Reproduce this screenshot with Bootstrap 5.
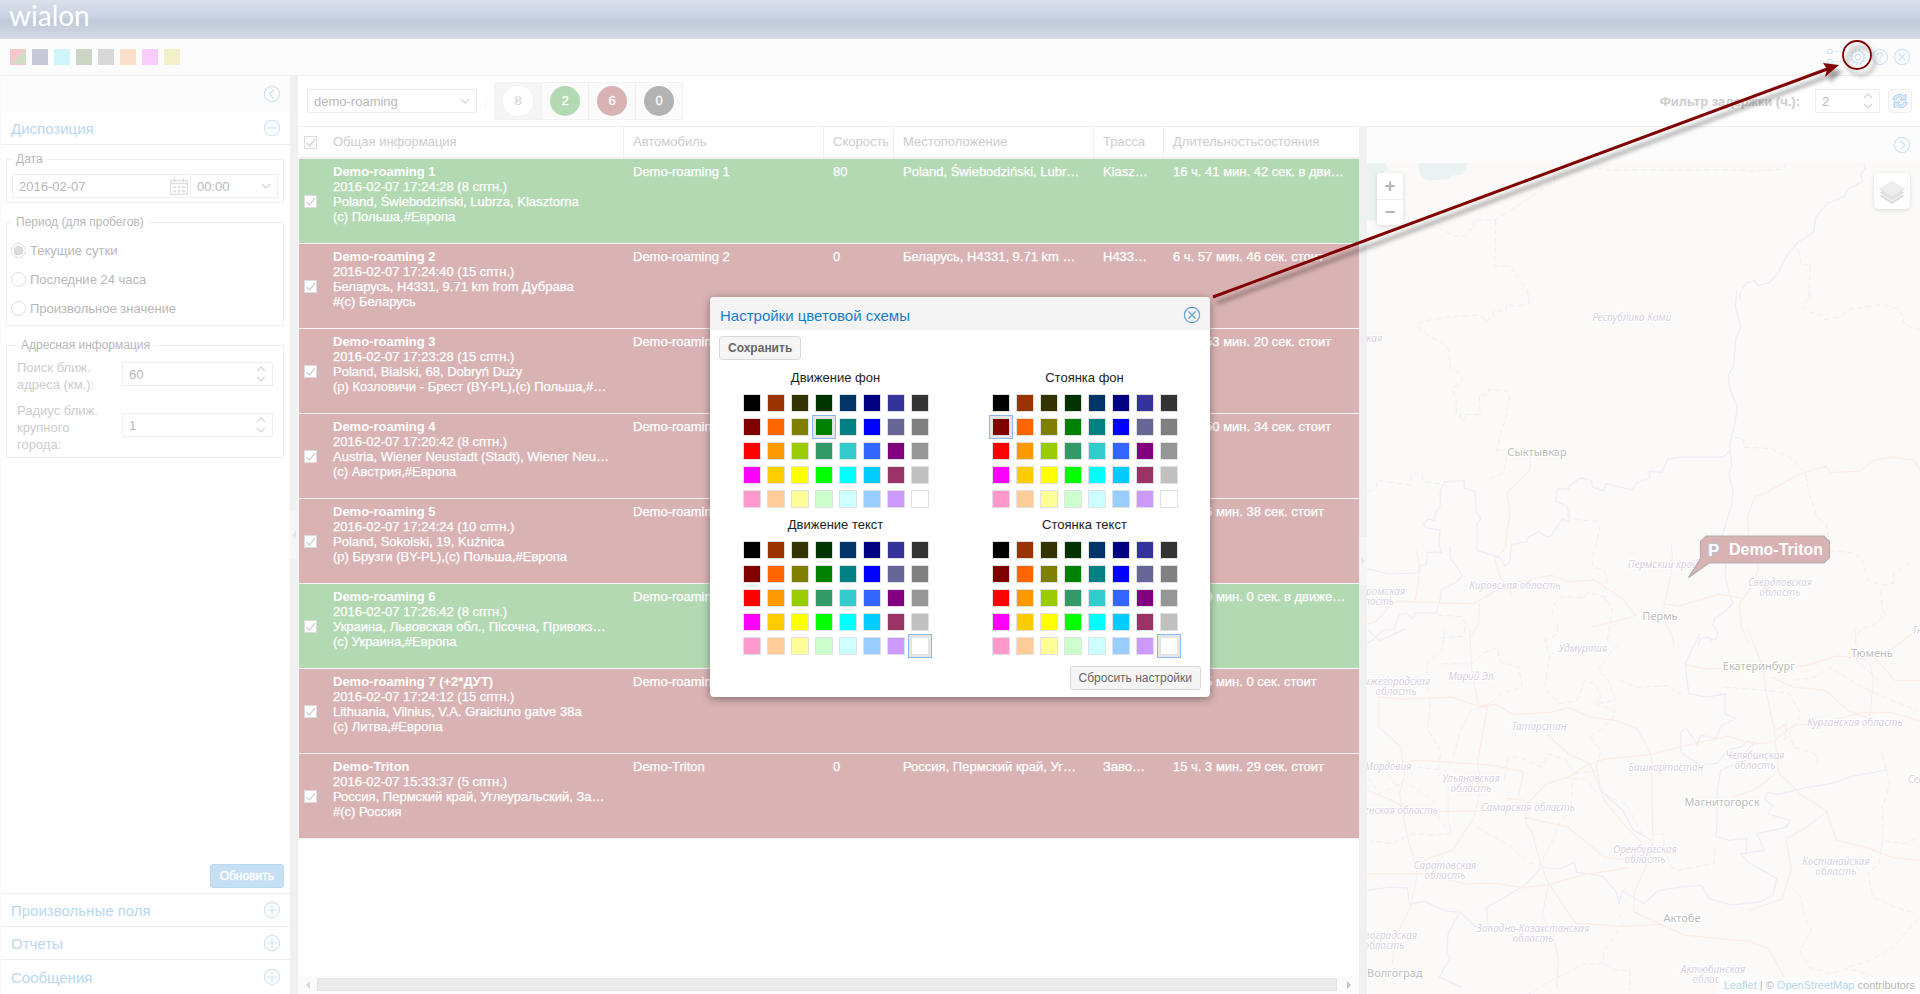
<!DOCTYPE html>
<html lang="ru">
<head>
<meta charset="utf-8">
<meta name="viewport" content="width=device-width, initial-scale=1">
<title>Wialon</title>
<link href="https://cdn.jsdelivr.net/npm/bootstrap@5.3.0/dist/css/bootstrap.min.css" rel="stylesheet">
<style>
:root{--line:#efefef;--ink:#b8b8b8;--pale:#cdcdcd;--link:#b9d8f0;--ring:#cfe3f2}
body{font-family:"Liberation Sans",Arial,sans-serif;font-size:13px;line-height:15px;color:var(--ink);background:#fff}
button,input,select{font-family:inherit;font-size:13px}
.app{height:100vh;min-height:700px}
.masthead{height:39px;background:linear-gradient(#dbe1ec 0,#c8d2e2 18px,#c1cad7 19px,#c5cedb 26px,#d5d9e7 39px)}
.brand{font-family:Lato,sans-serif;font-size:28px;line-height:30px;color:#fff;padding-left:9px;text-decoration:none}
.tools{height:37px;background:#fcfcfc;border-bottom:1px solid var(--line);padding:0 9px 0 10px;gap:6px}
.chip{width:16px;height:16px;border:0;padding:0}
.chip.mix{background:linear-gradient(135deg,#f8c8c8 50%,#d3dcc8 50%);border:1px solid #f8c8c8}
.ic{width:18px;height:18px;display:block;fill:none;stroke:var(--ring);stroke-width:1.2}
.plain{border:0;background:none;padding:0}
.side{width:290px;flex:none;border-left:1px solid #fafafa}
.side-top{height:36px;background:#fcfcfc;padding-right:9px}
.acc{height:33px;font-size:15px;color:var(--link);border-top:1px solid var(--line);padding:0 9px 0 10px;text-align:left}
.acc.first{border-top:0;border-bottom:1px solid var(--line)}
.acc:last-child{height:35px}
.splitter{width:8px;flex:none;background:#f0f0f0;display:flex;align-items:center}
.grip{width:8px;height:48px;background:#f6f6f6}
fieldset.fs{border:1px solid var(--line);margin:19px 6px 0 5px;position:relative}
fieldset.dated{margin-top:14px;padding:14px 5px 4px}
fieldset.period{padding:13px 4px 2px}
fieldset.deep{padding:13px 10px 4px}
.fs legend{position:absolute;top:-9px;left:5px;width:auto;float:none;margin:0;padding:0 4px;font-size:12px;line-height:16px;background:#fff}
.fs.deep legend{left:10px}
.field{height:24px;border:1px solid var(--line);background:#fff;position:relative;display:flex;align-items:center}
.field input,.field select{border:0;outline:0;background:none;color:var(--ink);width:100%;padding:0 6px;appearance:none;height:22px}
.field svg{position:absolute;right:6px;pointer-events:none}
.opt{height:29px;display:flex;align-items:center;gap:4px}
.opt input{appearance:none;width:15px;height:15px;border:1px solid #dedede;border-radius:50%;margin:0}
.opt input:checked{background:radial-gradient(circle,#dcdcdc 0 5px,#fff 5px)}
.lbl{width:105px;padding-right:15px;line-height:17px;color:var(--pale);flex:none}
.refresh{height:24px;border:1px solid #b9dbf0;border-radius:3px;background:#c5e0f3;color:#fff;padding:0 9px;font-size:12px;-webkit-text-stroke:.3px #fff}
.bar{height:51px;border-bottom:1px solid var(--line);padding:0 8px 0 9px}
.seg{height:38px;border:1px solid #f2f2f2;border-radius:2px;background:#fbfbfb;display:flex}
.seg button{border:0;border-left:1px solid #f0f0f0;width:47px;background:none;padding:0;display:flex;align-items:center;justify-content:center}
.seg button:first-child{background:#f5f5f5;border-left:0;width:46px}
.dot{width:30px;height:30px;border-radius:50%;line-height:30px;color:#fff;font-size:13px;-webkit-text-stroke:.3px #fff}
.reload{width:24px;height:24px;border:1px solid #efefef;background:#fbfbfb;padding:0}
.grid-pane{border-left:1px solid #fafafa;min-width:0}
table.units{table-layout:fixed;width:100%;border-collapse:separate;border-spacing:0}
.units th{height:32px;font-weight:400;color:var(--pale);padding:0 9px 2px;border-left:1px solid var(--line);border-bottom:2px solid #f0f0f0;white-space:nowrap;overflow:hidden}
.units th:nth-child(-n+2){border-left:0;padding-left:10px}
.units td{height:85px;vertical-align:top;padding:5px 10px 0;border-bottom:1px solid #f3f3f5;color:#fff;white-space:nowrap;overflow:hidden;-webkit-text-stroke:.25px #fff}
.units td b{-webkit-text-stroke:0}
.units .pick,.units th.pick{padding:0 0 0 5px;vertical-align:middle;overflow:visible}
.go td{background:#b3d9b3}
.halt td{background:#d9b3b3}
.tick{appearance:none;width:13px;height:13px;border:1px solid #dcdcdc;margin:0;display:block;background:#fff url("data:image/svg+xml,%3Csvg xmlns='http://www.w3.org/2000/svg' viewBox='0 0 11 11'%3E%3Cpath d='M1.5 6l3 3 5.500-7' fill='none' stroke='%23d2d2d2' stroke-width='1.300'/%3E%3C/svg%3E")}
.hscroll{height:18px;background:#fbfbfb;padding:2px 7px 3px;gap:6px}
.thumb{height:13px;background:#ebebeb;border:1px solid #e4e4e4}
.map-pane{flex:0 0 28.8vw}
.map-top{height:36px;background:#fcfcfc;padding-right:9px}
.map-area{background:#fbfaf9;overflow:hidden}
.map-area>svg{position:absolute;inset:0;width:100%;height:100%}
.edge path{fill:none;vector-effect:non-scaling-stroke;stroke:#f3eaf6;stroke-width:1.3}
.edge .dash{stroke:#f1eef4;stroke-dasharray:6 3;stroke-width:1}
.edge .road{stroke:#fdece6;stroke-width:1.2}
.edge path.lake{fill:#ebf3f2;stroke:none}
.names text{font-family:"Noto Sans",sans-serif;font-size:10px;font-style:italic;fill:#dccfe0;text-anchor:middle;paint-order:stroke;stroke:#fff;stroke-width:2px}
.names text.town{font-style:normal;font-size:11px;fill:#bdbdbd}
.names text.r{text-anchor:end}
.names text.l{text-anchor:start}
.zoomer{position:absolute;left:10px;top:10px;width:26px;border-radius:4px;background:#fff;box-shadow:0 1px 5px #0002}
.zoomer button{border:0;background:none;display:block;width:26px;height:26px;padding:0;font:bold 18px/25px "Liberation Sans",Arial,sans-serif;color:#b5b5b5}
.zoomer button+button{border-top:1px solid var(--line)}
.layers{position:absolute;right:10px;top:10px;width:36px;height:36px;border:0;border-radius:5px;background:#fff;box-shadow:0 1px 5px #0002;padding:4px}
.credit{position:absolute;right:0;bottom:0;background:#fdfdfd;font-size:11px;line-height:17px;padding:0 5px;white-space:nowrap}
.credit a{color:#b2d9e8;text-decoration:none}
.callout{position:absolute;inset:0;width:100%;height:100%;pointer-events:none}
.dlg{width:500px;border-radius:4px;background:#fff;box-shadow:0 2px 8px #0006;color:#222}
.dlg-head{height:33px;background:#f4f4f4;border-radius:4px 4px 0 0;padding:3px 9px 0 10px;font-size:15px;color:#157fcc}
.dlg-head .ic{stroke:#5ea2d3}
.dlg-btn{height:24px;border:1px solid #d8d8d8;border-radius:3px;background:#f5f5f5;color:#666;padding:0 8px;font-size:12px;line-height:20px}
.cap{height:27px;line-height:27px;text-align:center}
.swatches{display:grid;grid-template-columns:repeat(8,24px);justify-content:center}
.sw{width:24px;height:24px;border:1px solid transparent;background:none;padding:2px}
.sw.on{border-color:#8bb8f3;background:#e6e6e6}
.sw i{display:block;width:18px;height:18px;border:1px solid #e1e1e1}
</style>
</head>
<body>
<div class="app d-flex flex-column position-relative overflow-hidden">
<header class="masthead flex-shrink-0"><a class="brand d-inline-block" href="#">wialon</a></header>
<div class="tools d-flex align-items-center flex-shrink-0">
  <button class="chip mix" aria-label="Стандартная"></button>
  <button class="chip" aria-label="Синяя" style="background:#c6c8d6"></button>
  <button class="chip" aria-label="Голубая" style="background:#cff5fb"></button>
  <button class="chip" aria-label="Зелёная" style="background:#ccd6c4"></button>
  <button class="chip" aria-label="Серая" style="background:#d8d8d8"></button>
  <button class="chip" aria-label="Оранжевая" style="background:#fcdfca"></button>
  <button class="chip" aria-label="Розовая" style="background:#f8cdf9"></button>
  <button class="chip" aria-label="Жёлтая" style="background:#f3f1ca"></button>
  <div class="ms-auto d-flex align-items-center gap-1">
    <button class="plain" aria-label="Дерево"><svg class="ic" viewBox="0 0 18 18"><path d="M1 1.500h4v4h-4zM1 11.500h4v4h-4z"/><path d="M7 3.500h10M7 13.500h10" stroke-dasharray="1 1"/></svg></button>
    <button class="plain" aria-label="Настройки"><svg class="ic" viewBox="0 0 18 18"><circle cx="9" cy="9" r="2.800"/><circle cx="9" cy="9" r="6"/><circle cx="9" cy="9" r="7.300" stroke-width="1.800" stroke-dasharray="2 1.820"/></svg></button>
    <button class="plain" aria-label="Справка"><svg class="ic" viewBox="0 0 18 18"><circle cx="9" cy="9" r="7.600"/><path d="M6.500 7.200c0-3.400 5-3.200 5-.2 0 2-2.500 1.800-2.500 4M9 12.300v1.400"/></svg></button>
    <button class="plain" aria-label="Закрыть"><svg class="ic" viewBox="0 0 18 18"><circle cx="9" cy="9" r="7.600"/><path d="M5.500 5.500l7 7M12.500 5.500l-7 7"/></svg></button>
  </div>
</div>

<div class="d-flex flex-grow-1" style="min-height:0">
  <aside class="side d-flex flex-column">
    <div class="side-top d-flex align-items-center justify-content-end flex-shrink-0">
      <button class="plain" aria-label="Свернуть"><svg class="ic" viewBox="0 0 18 18"><circle cx="9" cy="9" r="7.600"/><path d="M11 4.500L6.500 9l4.500 4.500"/></svg></button>
    </div>
    <button class="plain acc first d-flex align-items-center justify-content-between flex-shrink-0">Диспозиция<svg class="ic" viewBox="0 0 18 18"><circle cx="9" cy="9" r="7.600"/><path d="M4 9h10"/></svg></button>
    <form class="d-flex flex-column flex-grow-1" style="min-height:0">
      <fieldset class="fs dated d-flex flex-shrink-0"><legend>Дата</legend>
        <div class="field" style="width:179px"><input type="text" value="2016-02-07" aria-label="Дата"><svg style="right:2px" width="18" height="18" viewBox="0 0 18 18" fill="none" stroke="#dedede"><path d="M.5 3.500h17v14H.5z" stroke-width="1.300"/><path d="M1 6.500h16M4.500 1v4M13.500 1v4" stroke-width="1.300"/><path d="M3.500 9.500h2v1.500h-2zM8 9.500h2v1.500H8zM12.500 9.500h2v1.500h-2zM3.500 13.500h2V15h-2zM8 13.500h2V15H8zM12.500 13.500h2V15h-2z"/></svg></div>
        <div class="field flex-grow-1 border-start-0"><select aria-label="Время"><option>00:00</option></select><svg width="10" height="6" fill="none" stroke="#d4d4d4" stroke-width="1.200"><path d="M1 1l4 4 4-4"/></svg></div>
      </fieldset>
      <fieldset class="fs period flex-shrink-0"><legend>Период (для пробегов)</legend>
        <label class="opt"><input type="radio" name="period" checked>Текущие сутки</label>
        <label class="opt"><input type="radio" name="period">Последние 24 часа</label>
        <label class="opt"><input type="radio" name="period">Произвольное значение</label>
      </fieldset>
      <fieldset class="fs deep flex-shrink-0"><legend>Адресная информация</legend>
        <div class="d-flex align-items-start"><label class="lbl" for="near">Поиск ближ. адреса (км.):</label><div class="field flex-grow-1" style="margin-top:3px"><input id="near" type="text" value="60"><svg width="10" height="16" fill="none" stroke="#d4d4d4" stroke-width="1.200"><path d="M1 5l4-4 4 4M1 11l4 4 4-4"/></svg></div></div>
        <div class="d-flex align-items-start" style="margin-top:9px"><label class="lbl" for="big">Радиус ближ. крупного города:</label><div class="field flex-grow-1" style="margin-top:11px"><input id="big" type="text" value="1"><svg width="10" height="16" fill="none" stroke="#d4d4d4" stroke-width="1.200"><path d="M1 5l4-4 4 4M1 11l4 4 4-4"/></svg></div></div>
      </fieldset>
      <div class="mt-auto text-end" style="padding:0 6px 5px"><button type="button" class="refresh">Обновить</button></div>
    </form>
    <button class="plain acc d-flex align-items-center justify-content-between flex-shrink-0">Произвольные поля<svg class="ic" viewBox="0 0 18 18"><circle cx="9" cy="9" r="7.600"/><path d="M4 9h10M9 4v10"/></svg></button>
    <button class="plain acc d-flex align-items-center justify-content-between flex-shrink-0">Отчеты<svg class="ic" viewBox="0 0 18 18"><circle cx="9" cy="9" r="7.600"/><path d="M4 9h10M9 4v10"/></svg></button>
    <button class="plain acc d-flex align-items-center justify-content-between flex-shrink-0">Сообщения<svg class="ic" viewBox="0 0 18 18"><circle cx="9" cy="9" r="7.600"/><path d="M4 9h10M9 4v10"/></svg></button>
  </aside>
  <div class="splitter"><svg class="grip" viewBox="0 0 8 48"><path d="M6 20v8L2 24z" fill="#e6e6e6"/></svg></div>

  <main class="d-flex flex-column flex-grow-1" style="min-width:0">
    <div class="bar d-flex align-items-center flex-shrink-0">
      <div class="field" style="width:170px"><select aria-label="Группа"><option>demo-roaming</option></select><svg width="10" height="6" fill="none" stroke="#d4d4d4" stroke-width="1.200"><path d="M1 1l4 4 4-4"/></svg></div>
      <div class="vr mx-2" style="height:14px;align-self:center;opacity:.12"></div>
      <div class="seg">
        <button aria-pressed="true"><span class="dot" style="background:#fff;color:#b8b8b8">8</span></button>
        <button><span class="dot" style="background:#b3d9b3">2</span></button>
        <button><span class="dot" style="background:#d9b3b3">6</span></button>
        <button><span class="dot" style="background:#b3b3b3">0</span></button>
      </div>
      <label class="ms-auto fw-bold" for="delay" style="color:#cdcdcd;margin-right:15px">Фильтр задержки (ч.):</label>
      <div class="field" style="width:65px"><input id="delay" type="text" value="2"><svg width="10" height="16" fill="none" stroke="#d4d4d4" stroke-width="1.200"><path d="M1 5l4-4 4 4M1 11l4 4 4-4"/></svg></div>
      <button class="reload ms-2 rounded-1" aria-label="Обновить"><svg width="16" height="16" viewBox="0 0 16 16" class="d-block mx-auto" fill="#d9ecfc" stroke="#a5cdf2" stroke-width=".9"><path d="M1 6.800C1.400 1.800 7.500-.6 11.600 3L14 1v6H8l1.800-2C7.200 3 4.600 4.300 4.200 6.800z"/><path d="M15 9.200c-.4 5-6.500 7.400-10.600 3.800L2 15V9h6l-1.800 2c2.600 2 5.200.7 5.600-1.800z"/></svg></button>
    </div>
    <div class="d-flex flex-grow-1" style="min-height:0">
      <section class="grid-pane d-flex flex-column flex-grow-1">
        <div class="flex-grow-1 overflow-hidden">
        <table class="units">
          <colgroup><col style="width:24px"><col style="width:300px"><col style="width:200px"><col style="width:70px"><col style="width:200px"><col style="width:70px"><col></colgroup>
          <thead><tr><th class="pick"><input class="tick" type="checkbox" checked aria-label="Все"></th><th>Общая информация</th><th>Автомобиль</th><th>Скорость</th><th>Местоположение</th><th>Трасса</th><th>Длительностьсостояния</th></tr></thead>
          <tbody>
          <tr class="go"><td class="pick"><input class="tick" type="checkbox" checked aria-label="Demo-roaming 1"></td><td><b>Demo-roaming 1</b><br>2016-02-07 17:24:28 (8 сптн.)<br>Poland, Świebodziński, Lubrza, Klasztorna<br>(с) Польша,#Европа</td><td>Demo-roaming 1</td><td>80</td><td>Poland, Świebodziński, Lubr…</td><td>Klasz…</td><td>16 ч. 41 мин. 42 сек. в дви…</td></tr>
          <tr class="halt"><td class="pick"><input class="tick" type="checkbox" checked aria-label="Demo-roaming 2"></td><td><b>Demo-roaming 2</b><br>2016-02-07 17:24:40 (15 сптн.)<br>Беларусь, H4331, 9.71 km from Дубрава<br>#(с) Беларусь</td><td>Demo-roaming 2</td><td>0</td><td>Беларусь, H4331, 9.71 km …</td><td>H433…</td><td>6 ч. 57 мин. 46 сек. стоит</td></tr>
          <tr class="halt"><td class="pick"><input class="tick" type="checkbox" checked aria-label="Demo-roaming 3"></td><td><b>Demo-roaming 3</b><br>2016-02-07 17:23:28 (15 сптн.)<br>Poland, Bialski, 68, Dobryń Duży<br>(р) Козловичи - Брест (BY-PL),(с) Польша,#…</td><td>Demo-roaming 3</td><td></td><td></td><td></td><td>13 ч. 53 мин. 20 сек. стоит</td></tr>
          <tr class="halt"><td class="pick"><input class="tick" type="checkbox" checked aria-label="Demo-roaming 4"></td><td><b>Demo-roaming 4</b><br>2016-02-07 17:20:42 (8 сптн.)<br>Austria, Wiener Neustadt (Stadt), Wiener Neu…<br>(с) Австрия,#Европа</td><td>Demo-roaming 4</td><td></td><td></td><td></td><td>12 ч. 50 мин. 34 сек. стоит</td></tr>
          <tr class="halt"><td class="pick"><input class="tick" type="checkbox" checked aria-label="Demo-roaming 5"></td><td><b>Demo-roaming 5</b><br>2016-02-07 17:24:24 (10 сптн.)<br>Poland, Sokolski, 19, Kuźnica<br>(р) Брузги (BY-PL),(с) Польша,#Европа</td><td>Demo-roaming 5</td><td></td><td></td><td></td><td>15 ч. 6 мин. 38 сек. стоит</td></tr>
          <tr class="go"><td class="pick"><input class="tick" type="checkbox" checked aria-label="Demo-roaming 6"></td><td><b>Demo-roaming 6</b><br>2016-02-07 17:26:42 (8 сптн.)<br>Украина, Львовская обл., Пісочна, Привокз…<br>(с) Украина,#Европа</td><td>Demo-roaming 6</td><td></td><td></td><td></td><td>8 ч. 20 мин. 0 сек. в движе…</td></tr>
          <tr class="halt"><td class="pick"><input class="tick" type="checkbox" checked aria-label="Demo-roaming 7"></td><td><b>Demo-roaming 7 (+2*ДУТ)</b><br>2016-02-07 17:24:12 (15 сптн.)<br>Lithuania, Vilnius, V.A. Graiciuno gatve 38a<br>(с) Литва,#Европа</td><td>Demo-roaming 7</td><td></td><td></td><td></td><td>15 ч. 5 мин. 0 сек. стоит</td></tr>
          <tr class="halt"><td class="pick"><input class="tick" type="checkbox" checked aria-label="Demo-Triton"></td><td><b>Demo-Triton</b><br>2016-02-07 15:33:37 (5 сптн.)<br>Россия, Пермский край, Углеуральский, За…<br>#(с) Россия</td><td>Demo-Triton</td><td>0</td><td>Россия, Пермский край, Уг…</td><td>Заво…</td><td>15 ч. 3 мин. 29 сек. стоит</td></tr>
          </tbody>
        </table>
        </div>
        <div class="hscroll d-flex align-items-center"><svg width="5" height="8"><path d="M4 0v8L0 4z" fill="#d9d9d9"/></svg><div class="thumb flex-grow-1 me-1"></div><svg width="5" height="8"><path d="M0 0v8l4-4z" fill="#c4c4c4"/></svg></div>
      </section>
      <div class="splitter"><svg class="grip" viewBox="0 0 8 48"><path d="M2 20v8l4-4z" fill="#e6e6e6"/></svg></div>
      <section class="map-pane d-flex flex-column">
        <div class="map-top d-flex align-items-center justify-content-end flex-shrink-0"><button class="plain" aria-label="Свернуть карту"><svg class="ic" viewBox="0 0 18 18"><circle cx="9" cy="9" r="7.600"/><path d="M7.500 4.500L12 9l-4.500 4.500"/></svg></button></div>
        <div class="map-area flex-grow-1 position-relative">
          <svg viewBox="1367 162 553 832" preserveAspectRatio="xMidYMid slice">
            <g class="edge" transform="translate(1300 0) scale(.3954 .3333)">
              <path class="lake" d="M169 486h46l10 22-14 6 24 28-6 26 10 40-22 14-8-12-10 14 12 26-20 10h-22zM298 486h124v20l-12 16-24 4-10 10-48 4-20-10-8-24z"/>
              <path class="dash" d="M262 640l80 36 46 30h30l10-20h12v-28h54l150-115-2-30M495 658l-2 140 40-2 46 84v30M750 500l18 8h360l10 4 84-6 10-20M1243 725l20 30 4 38h24l-4 90 6 20"/>
              <path d="M1426 486l4 18-12 18 4 22-34 20-12 24-42 20-30 44-4 42-42 32-20 30-16 30-14 34-20 26-30 10-8-16-20 6-16 30-2 20"/>
            </g>
            <g class="edge" transform="translate(1350 290) scale(.3635 .3333)">
              <path class="dash" d="M488 0l4 38-26 8-34-4-4 22-30-6-6 22-20 14-6-14-16-6-86 6-60 12-20 14 30 28 44 26 14 20 4 50 28 22 6 14-14 14-14 18 10 30v38h10l4 28 10-8v-14h42l-2-56 24-6v-14l54 6 6 12-14 80-8 16-14 70h28l-8 66-50 24M48 606l24-16 4-20 88 14 6-34h28l2 22 60 10 14 20M1264 0l2 22-20 18 10 22 40 12 10 14 42-10 26-22 90-14 44 14 16 22-2 18 32 20h20M1057 440l26 6v24l76 4 56 30 38 44 10 60 22 72 26 22 8 78 72 8 20 24 16 60 40 12 28-6v-30l16-10 40-26M1460 902l4 50 8 24-36 30-30 10-12 20-4 14M595 672l30 16 54 4 8 24-8 40-14 50 4 24 30 10 10 26-12 40 6 30M240 974l64 4 16 24-10 36-60 4M708 1050l14-90-18-40-50-14-10 16-60-4-20 20-8 26 16 30-2 36-34 22"/>
              <path d="M1064 0l-4 50 16 60-14 30-8 90-14 24 6 46 20 50-8 54-14 60 6 60-8 30 12 40-4 50-20 70-12 50 2 20 14 40-2 36 12 50 10 30-24 24-26 20-6 20 14 20-4 20-14 6-6-10-24 4-6 20M1046 480l-18 20h-120l-34 6-16 40-34-4v20l-34 14-14 22-72-18-6 22-30-12-4-20-30-8-30 24-2 10-30-2-6 38 30 14 8 26-2 22-18-8-30 50-12 4-22-16-26 14-10 16-40 8-4 54-14 10-12-24-16-6-48-16v-80l10-16-12-20-4-60-30-12v-22l-54 4-12 30v40l-14 26v20l-20-4-12 16 8 10 38 6-4 42 8 26h-40l-2 36-20 4-4 22-80 2-60-16h-24M274 766l4 40 32 50-18 20-40 20-4 30-12 42h-56l-8 18-16-18-20 4-14 44-32 4-36 36-14-6"/>
              <path class="road" d="M498 496l-4 44-62 66 8 60-14 110-28 30 12 46 24 40 10 20M182 780l12 50-14 100M48 1000l24-6 34-44 24-18 50 2 160 6 32-20 60-40 60-12 60-14 50 20 70-6 80 60 34 46-50 18-70 16M884 760l4 60-24 130v40l24 50 4 30M862 940l44 6 110-34 58 10M1568 540l-16-30-60-10-50 8-40 34-80 4-12-18-26 6-60 24-84 52-26 8-20 60 4 100 26 50-12 50-40 60 4 70 20 50M356 940l-2 60-20 40"/>
            </g>
            <g class="edge" transform="translate(1350 630) scale(.3635 .3333)">
              <path class="dash" d="M260 0l-6 60-40 36-4 60 12 60-8 80 36 70-10 60 30 50v80l6 50M254 100h80l30-30 40-20 10 44 50 16 10 60-60 20-40 40-40 10-30 60-20 80-20 40-80-10-54 60-30-50-60-30-16-20M535 20l14 60-14 90 40 50 50-10 20-60 30 10 16 40-20 20 60-10-20-60-30-30 40-60 20-20M740 150l50 20 90-4 20 24 20-10M660 320l60-50 10-30-60-20M660 320l30 40-14 60-60 10-20-40-50-20-20 40-60-30h-30l-12 70-80 10-80-20M50 440l30 50 70-36 80 56 16 60 40 40-60 4-50-6-60 32-58-10M350 590l30 20 60 36 50 50 30 10 40-80 20-60 30-20v-100l40 0 30 40M680 440l30 60 50 20 50 104M830 610l34 0v40l20 60 16 10 100-20 8-60M1030 170l120 10 60 10 30 60-30 60 10 40 60 20 10 40M1220 150l60-10 40-30 90 60 80 40 70 30M1390 0l4 90 60 60M1465 370l20 90-20 70 2 100 60 10 40-20M1465 630l-10 70-30 30 14 70 60 30 60 20M1200 750l40 50 10 60 20 40-32 60 24 50 60 20 50-16 60 20M1372 1010l60-20 60-40 78-90M740 850l10 30-50 80-6 40-60 0-20 20-60 30-60 40M700 1000l30 20h40v60"/>
              <path d="M962 10l-40 90 10 90 50 10 50-10v60l30 14-40 20-16 40-40-10-10 30-30-50-16 10v60l50 40 50-6 30-40 40-10 10-16 24 4-30 34-4 20-60 30-10 60v100l-4 40M50 0l30 30 30-14 40-20M676 400l14 80 60 60 30 60 20 10 28 20M48 780l60-10 50 2 6 50 40-10 60 30 40 4 60 60 16-6-4-70 50-30 60-40 40-50 50 6 40-20 8 30 70 10 40 50 6 34 8-40 60 40 40-40 60-10 60-6 20 40 60 20 80-10 36-20 10-50-80-50-20-24 66-10-20-50 80-20 10-20-60-20 14-24-24-20 10-20 30 6 70-20 80-14 50-20 100-20M1012 620l30 10 50-6-2 50M300 850l-30 60-4 60 10 10-30 60 60 30"/>
              <path class="road" d="M70 170l10 30 60 6 140-6 80 30 40-8 50 30 100-6 50-14 60 28 70 10 60 24 40 80 3 260-10 50-40 100-2 60 140 70 180 20 50 20 40 80v70M80 200v90l60 60 10 80-14 60 20 120 30 120-20 100-40 90-10 80M48 730h150l120 30 80-2 80 14 70-10 100-30 120-20M330 0l4 110 20 120 26-10-20 120-10 60 12 60-20 100-60 100-60 20-30 20M48 480l60 26 70 40 190-6 90-16 20-100-90-20-120-10-90-4-30 10M540 310l60 60 60 30 40-14 130-14 80-24 60-14 70-16 70 22 50-4 60-50 120-20 70-20 80 0 120 40M660 400l40 110 60 80 46 50M660 400l-60 40-60 20-54 60-4 50 20 40 20 80 20 60 60 100 20 28 120 10 120-6M480 510l-50-6M545 765l-16 90 30 60 14 70-4 90M480 560l120 30 100 90 70 10M1096 0l40 110 10 80 20 100 14 140 70 70 60 40 30 90 80 20 70 30 80 10M1170 300l30-20-4 50M1170 430l-60 50-60 20M1310 545l-60 50-50 30 14 90-24 90-94 36M920 100l60 16 120-10h150l90-30 80 10 70-30 60-50M1430 90l10 60-10 110M1160 140l60 30 90 10 60 60 60 24M1440 80l60 70h68"/>
            </g>
            <g class="names">
              <text x="1632" y="320">Республика Коми</text><text class="r" x="1382" y="341">ская</text>
              <text class="town" x="1537" y="455">Сыктывкар</text><text x="1663" y="568">Пермский край</text>
              <text x="1515" y="589">Кировская область</text><text x="1780" y="586">Свердловская</text><text x="1780" y="596">область</text>
              <text class="r" x="1405" y="595">Костромская</text><text class="r" x="1394" y="605">область</text>
              <text class="town" x="1660" y="620">Пермь</text><text class="l" x="1912" y="634">Тюменская область</text>
              <text x="1583" y="652">Удмуртия</text><text x="1471" y="680">Марий Эл</text>
              <text class="r" x="1430" y="685">Нижегородская</text><text x="1396" y="695">область</text>
              <text class="town" x="1759" y="670">Екатеринбург</text><text class="town" x="1872" y="657">Тюмень</text>
              <text x="1539" y="730">Татарстан</text><text x="1855" y="726">Курганская область</text>
              <text x="1755" y="759">Челябинская</text><text x="1755" y="769">область</text>
              <text x="1666" y="771">Башкортостан</text><text x="1388" y="770">Мордовия</text>
              <text x="1471" y="782">Ульяновская</text><text x="1471" y="792">область</text><text class="l" x="1908" y="783">Северо-</text>
              <text class="town" x="1722" y="806">Магнитогорск</text><text x="1528" y="811">Самарская область</text>
              <text class="r" x="1438" y="814">Пензенская область</text><text x="1645" y="853">Оренбургская</text><text x="1645" y="863">область</text>
              <text x="1445" y="869">Саратовская</text><text x="1445" y="879">область</text><text x="1836" y="865">Костанайская</text><text x="1836" y="875">область</text>
              <text class="town" x="1682" y="922">Актобе</text><text x="1533" y="932">Западно-Казахстанская</text><text x="1533" y="942">область</text>
              <text class="r" x="1417" y="939">Волгоградская</text><text x="1384" y="949">область</text><text class="town l" x="1367" y="977">Волгоград</text>
              <text x="1713" y="973">Актюбинская</text><text x="1713" y="983">область</text>
            </g>
            <path d="M1706 535.500h118l5.500 5.500v16l-5.500 5.500h-115L1688.500 577l12-19v-17z" fill="#d9b3b3" stroke="#b5adad" stroke-width="1.200"/>
            <text x="1708" y="556" font-family="Liberation Sans" font-weight="700" font-size="17" fill="#fff" stroke="#b4c4d4" stroke-width="2" paint-order="stroke">P</text>
            <text x="1729" y="555" font-family="Liberation Sans" font-weight="700" font-size="16" fill="#fff">Demo-Triton</text>
          </svg>
          <div class="zoomer"><button aria-label="Приблизить">+</button><button aria-label="Отдалить">−</button></div>
          <button class="layers" aria-label="Слои"><svg width="28" height="28" viewBox="0 0 28 28" stroke="#fff" stroke-width=".8"><path d="M1 19l13 8.500L27 19l-13-8z" fill="#dcdcdc"/><path d="M1 15.500L14 24l13-8.500-13-8z" fill="#e0e0e0"/><path d="M1 11.500L14 20l13-8.500L14 3z" fill="#eee"/><path d="M1 11.500L14 20l13-8.500" fill="none" stroke="#d5d5d5"/></svg></button>
          <div class="credit"><a href="#">Leaflet</a> | © <a href="#">OpenStreetMap</a> contributors</div>
        </div>
      </section>
    </div>
  </main>
</div>

<div class="dlg position-absolute top-50 start-50 translate-middle" role="dialog" aria-labelledby="dlgTitle">
  <div class="dlg-head d-flex align-items-center justify-content-between"><span id="dlgTitle">Настройки цветовой схемы</span><button class="plain" aria-label="Закрыть окно"><svg class="ic" viewBox="0 0 18 18"><circle cx="9" cy="9" r="7.600"/><path d="M5.500 5.500l7 7M12.500 5.500l-7 7"/></svg></button></div>
  <div style="padding:6px 9px 4px"><button class="dlg-btn fw-bold">Сохранить</button></div>
  <div class="row g-0" style="margin:0 1px">
    <div class="col-6"><div class="cap">Движение фон</div><div class="swatches" data-on="008000"></div></div>
    <div class="col-6"><div class="cap">Стоянка фон</div><div class="swatches" data-on="800000"></div></div>
    <div class="col-6"><div class="cap">Движение текст</div><div class="swatches" data-on="FFFFFF"></div></div>
    <div class="col-6"><div class="cap">Стоянка текст</div><div class="swatches" data-on="FFFFFF"></div></div>
  </div>
  <div class="text-end" style="padding:8px 9px 7px"><button class="dlg-btn">Сбросить настройки</button></div>
</div>

<svg class="callout" viewBox="0 0 1920 994">
  <defs><filter id="soft" x="-5%" y="-5%" width="110%" height="115%"><feDropShadow dx="4" dy="6" stdDeviation="2" flood-color="#000" flood-opacity=".4"/></filter></defs>
  <g filter="url(#soft)"><path d="M1213 297L1830 68" stroke="#800000" stroke-width="3"/><path d="M1839 65l-16-2 4 6-2 8z" fill="#800000"/><circle cx="1857" cy="55" r="14" fill="none" stroke="#800000" stroke-width="1.800"/></g>
</svg>
</div>
<script src="https://cdn.jsdelivr.net/npm/bootstrap@5.3.0/dist/js/bootstrap.bundle.min.js"></script>
<script>
const palette = ("000000 993300 333300 003300 003366 000080 333399 333333 " +
  "800000 FF6600 808000 008000 008080 0000FF 666699 808080 " +
  "FF0000 FF9900 99CC00 339966 33CCCC 3366FF 800080 969696 " +
  "FF00FF FFCC00 FFFF00 00FF00 00FFFF 00CCFF 993366 C0C0C0 " +
  "FF99CC FFCC99 FFFF99 CCFFCC CCFFFF 99CCFF CC99FF FFFFFF").split(" ");
document.querySelectorAll(".swatches").forEach(box => {
  box.innerHTML = palette.map(c =>
    `<button class="sw${c === box.dataset.on ? " on" : ""}" aria-label="#${c}"><i style="background:#${c}"></i></button>`).join("");
  box.addEventListener("click", e => {
    const b = e.target.closest(".sw");
    if (!b) return;
    box.querySelector(".on").classList.remove("on");
    b.classList.add("on");
  });
});
</script>
</body>
</html>
